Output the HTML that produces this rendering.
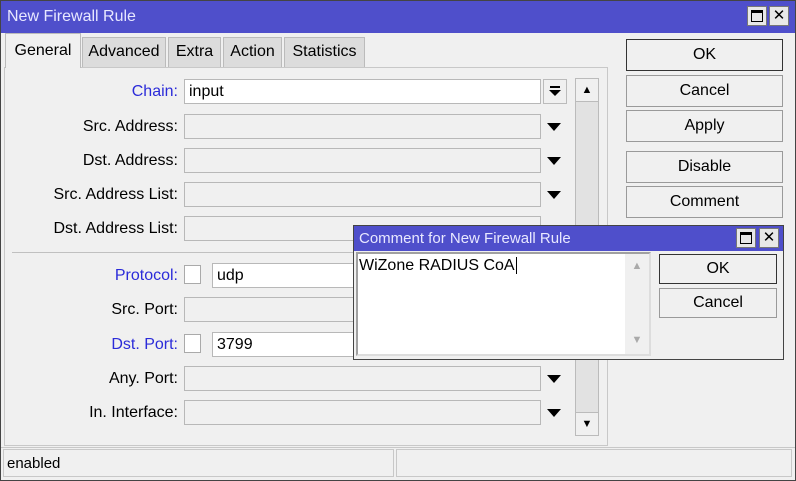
<!DOCTYPE html>
<html><head><style>
*{box-sizing:border-box;margin:0;padding:0}
body{width:796px;height:481px;background:#f0f0f0;font-family:"Liberation Sans",sans-serif;font-size:15px;color:#000;position:relative;overflow:hidden}
.a{position:absolute}
.win{left:0;top:0;width:796px;height:481px;border:1px solid #444;background:#f0f0f0}
.tb{background:#4f4fcb;color:#e8e8ff}
.tbtn{width:20px;height:20px;background:#e8e8e8;border:1px solid #777;font-size:15px;text-align:center;line-height:18px;color:#000}
.tab{top:37px;height:30px;background:#dcdcdc;border:1px solid #bbb;border-bottom:none;text-align:center;line-height:28px;font-size:16px}
.lbl{text-align:right;width:178px;left:0;font-size:16px;line-height:26px}
.blue{color:#2b2bd9}
.fld{left:184px;width:357px;height:25px;border:1px solid #b8b8b8;background:#f0f0f0}
.wh{background:#fff}
.tri{width:0;height:0;border-left:7px solid transparent;border-right:7px solid transparent;border-top:8px solid #000}
.btn{left:626px;width:157px;background:#f0f0f0;border:1px solid #9a9a9a;text-align:center;font-size:16px}
.cb{width:17px;height:19px;background:#fff;border:1px solid #aaa}
</style></head><body>
<div class="a win"></div>
<div class="a tb" style="left:1px;top:1px;width:794px;height:32px;font-size:16px;line-height:32px;padding-left:6px">New Firewall Rule</div>
<div class="a tbtn" style="left:747px;top:6px"><div style="margin:3px;width:12px;height:12px;border:1px solid #000;border-top-width:3px"></div></div>
<div class="a tbtn" style="left:769px;top:6px">✕</div>

<div class="a" style="left:4px;top:67px;width:604px;height:379px;border:1px solid #c8c8c8;background:#f0f0f0"></div>
<div class="a tab" style="left:5px;top:33px;width:76px;height:35px;background:#f0f0f0;line-height:34px">General</div>
<div class="a tab" style="left:82px;width:84px">Advanced</div>
<div class="a tab" style="left:168px;width:53px">Extra</div>
<div class="a tab" style="left:223px;width:59px">Action</div>
<div class="a tab" style="left:284px;width:81px">Statistics</div>

<div class="a lbl blue" style="top:79px">Chain:</div>
<div class="a fld wh" style="top:79px;padding-left:4px;line-height:23px;font-size:16px">input</div>
<div class="a" style="left:543px;top:79px;width:24px;height:25px;border:1px solid #bbb;background:#f0f0f0"><div style="position:absolute;left:6px;top:6px;width:10px;height:2px;background:#000"></div><div class="tri" style="position:absolute;left:5px;top:10px;border-left-width:6px;border-right-width:6px;border-top-width:6px"></div></div>

<div class="a lbl" style="top:114px">Src. Address:</div><div class="a fld" style="top:114px"></div><div class="a tri" style="left:547px;top:123px"></div>
<div class="a lbl" style="top:148px">Dst. Address:</div><div class="a fld" style="top:148px"></div><div class="a tri" style="left:547px;top:157px"></div>
<div class="a lbl" style="top:182px">Src. Address List:</div><div class="a fld" style="top:182px"></div><div class="a tri" style="left:547px;top:191px"></div>
<div class="a lbl" style="top:216px">Dst. Address List:</div><div class="a fld" style="top:216px"></div>
<div class="a" style="left:12px;top:252px;width:560px;height:1px;background:#c0c0c0"></div>

<div class="a lbl blue" style="top:263px">Protocol:</div><div class="a cb" style="left:184px;top:265px"></div>
<div class="a fld wh" style="left:212px;width:329px;top:263px;padding-left:4px;line-height:23px;font-size:16px">udp</div>
<div class="a lbl" style="top:297px">Src. Port:</div><div class="a fld" style="top:297px"></div>
<div class="a lbl blue" style="top:332px">Dst. Port:</div><div class="a cb" style="left:184px;top:334px"></div>
<div class="a fld wh" style="left:212px;width:329px;top:332px;padding-left:4px;line-height:23px;font-size:16px">3799</div>
<div class="a lbl" style="top:366px">Any. Port:</div><div class="a fld" style="top:366px"></div><div class="a tri" style="left:547px;top:375px"></div>
<div class="a lbl" style="top:400px">In. Interface:</div><div class="a fld" style="top:400px"></div><div class="a tri" style="left:547px;top:409px"></div>

<div class="a" style="left:575px;top:78px;width:24px;height:358px;border:1px solid #bbb;background:#e2e2e2"></div>
<div class="a" style="left:575px;top:78px;width:24px;height:24px;border:1px solid #bbb;background:#f0f0f0;text-align:center;font-size:11px;line-height:22px">▲</div>
<div class="a" style="left:575px;top:412px;width:24px;height:24px;border:1px solid #bbb;background:#f0f0f0;text-align:center;font-size:11px;line-height:22px">▼</div>

<div class="a btn" style="top:39px;height:32px;line-height:30px;border-color:#333">OK</div>
<div class="a btn" style="top:75px;height:32px;line-height:30px">Cancel</div>
<div class="a btn" style="top:110px;height:32px;line-height:30px">Apply</div>
<div class="a btn" style="top:151px;height:32px;line-height:30px">Disable</div>
<div class="a btn" style="top:186px;height:32px;line-height:30px">Comment</div>

<div class="a" style="left:1px;top:447px;width:794px;height:1px;background:#c8c8c8"></div>
<div class="a" style="left:3px;top:449px;width:391px;height:28px;border:1px solid #c8c8c8;line-height:28px;padding-left:3px;font-size:15px">enabled</div>
<div class="a" style="left:396px;top:449px;width:396px;height:28px;border:1px solid #c8c8c8"></div>

<div class="a" style="left:353px;top:225px;width:431px;height:135px;border:1px solid #444;background:#f0f0f0"></div>
<div class="a tb" style="left:354px;top:226px;width:429px;height:25px;line-height:25px;padding-left:5px;font-size:15px">Comment for New Firewall Rule</div>
<div class="a tbtn" style="left:736px;top:228px"><div style="margin:3px;width:12px;height:12px;border:1px solid #000;border-top-width:3px"></div></div>
<div class="a tbtn" style="left:759px;top:228px">✕</div>
<div class="a" style="left:356px;top:252px;width:295px;height:104px;border:2px solid #a0a0a0;border-right-color:#ddd;border-bottom-color:#ddd;background:#fff;padding:3px 1px;font-size:16px">WiZone RADIUS CoA<span style="border-left:1px solid #000;margin-left:1px"></span></div>
<div class="a" style="left:625px;top:254px;width:24px;height:100px;background:#f0f0f0;color:#aaa;font-size:11px;text-align:center"><div style="margin-top:6px">▲</div><div style="margin-top:62px">▼</div></div>
<div class="a" style="left:659px;top:254px;width:118px;height:30px;border:1px solid #333;text-align:center;line-height:28px;font-size:16px">OK</div>
<div class="a" style="left:659px;top:288px;width:118px;height:30px;border:1px solid #9a9a9a;text-align:center;line-height:28px;font-size:16px">Cancel</div>
</body></html>
